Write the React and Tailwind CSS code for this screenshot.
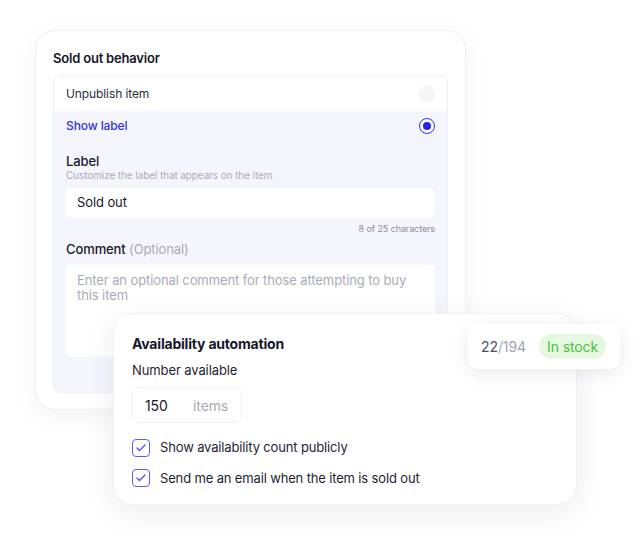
import { Check } from "lucide-react";


function Radio({ checked }) {
  if (checked) {
    return (
      <span className="flex h-[16px] w-[16px] items-center justify-center rounded-full border-[1.5px] border-[#2f2ff0] bg-white">
        <span className="h-[8px] w-[8px] rounded-full bg-[#2424ee]" />
      </span>
    );
  }

  return <span className="h-[16px] w-[16px] rounded-full border border-[#f0f0f2] bg-[#f7f7f8]" />;
}


function CheckRow({ label }) {
  return (
    <div className="flex items-center gap-[10px]">
      <span className="flex h-[18px] w-[18px] items-center justify-center rounded-[4px] border-[1.5px] border-[#5d5cf5] bg-white">
        <Check className="h-[12px] w-[12px] text-[#4f4ef0]" strokeWidth={2.5} />
      </span>
      <span className="text-[13px] tracking-[-0.15px] text-[#1f2433]">{label}</span>
    </div>
  );
}


export default function App() {
  return (
    <div className="relative h-[551px] w-[640px] overflow-hidden bg-white font-['Inter',sans-serif] tracking-[-0.1px]">
      <section className="absolute left-[35px] top-[30px] h-[380px] w-[431px] rounded-[20px] border border-[#f0f0f3] bg-white px-[17px] pt-[19px] shadow-[0_6px_24px_rgba(20,20,60,0.05)]">
        <h2 className="text-[13px] font-semibold leading-[16px] tracking-[-0.2px] text-[#15182a]">Sold out behavior</h2>
        <div className="mt-[9px] h-[318px] overflow-hidden rounded-[8px] border border-[#f0f0f4] bg-[#f5f5fe]">
          <div className="flex h-[35px] items-center justify-between bg-white px-[12px]">
            <span className="text-[12px] text-[#2a2e3d]">Unpublish item</span>
            <Radio />
          </div>
          <div className="flex h-[30px] items-center justify-between px-[12px]">
            <span className="text-[12px] font-medium text-[#3030e8]">Show label</span>
            <Radio checked />
          </div>
          <div className="px-[12px] pt-[12px]">
            <p className="text-[13px] font-medium leading-[16px] text-[#15182a]">Label</p>
            <p className="text-[10px] leading-[13px] text-[#a8acb8]">Customize the label that appears on the item</p>
            <div className="mt-[6px] flex h-[30px] items-center rounded-[5px] bg-white px-[11px] text-[13px] text-[#15182a]">
              Sold out
            </div>
            <p className="mt-[5px] text-right text-[9px] leading-[12px] text-[#8a8e9c]">8 of 25 characters</p>
            <p className="mt-[6px] text-[13px] font-medium leading-[16px] text-[#15182a]">
              Comment <span className="font-normal text-[#a8acb8]">(Optional)</span>
            </p>
            <div className="mt-[8px] h-[92px] rounded-[5px] bg-white px-[11px] pt-[8px] text-[13px] leading-[15px] text-[#a8acb8]">
              Enter an optional comment for those attempting to buy this item
            </div>
          </div>
        </div>
      </section>

      <section className="absolute left-[113px] top-[313px] h-[192px] w-[464px] rounded-[20px] border border-[#f2f2f4] bg-white px-[18px] pt-[21px] shadow-[0_8px_30px_rgba(20,20,60,0.08)]">
        <h3 className="text-[14px] font-bold leading-[18px] tracking-[-0.2px] text-[#15182a]">Availability automation</h3>
        <p className="mt-[9px] text-[13px] leading-[16px] text-[#1f2433]">Number available</p>
        <div className="mt-[9px] flex h-[36px] w-[110px] items-center rounded-[7px] border border-[#f0f0f3] bg-white px-[12px] text-[14px]">
          <span className="w-[48px] text-[#15182a]">150</span>
          <span className="text-[#a8acb8]">items</span>
        </div>
        <div className="mt-[15px] flex flex-col gap-[11px]">
          <CheckRow label="Show availability count publicly" />
          <CheckRow label="Send me an email when the item is sold out" />
        </div>
      </section>

      <div className="absolute left-[468px] top-[324px] flex h-[45px] w-[152px] items-center gap-[13px] rounded-[9px] bg-white pl-[13px] shadow-[0_4px_18px_rgba(20,20,60,0.09)]">
        <span className="whitespace-nowrap text-[14px]">
          <span className="text-[#4b5068]">22</span>
          <span className="text-[#a2a6b2]">/194</span>
        </span>
        <span className="whitespace-nowrap rounded-full bg-[#e6f8e2] px-[8px] py-[3px] text-[14px] leading-[19px] text-[#47c43a]">In stock</span>
      </div>
    </div>
  );
}
